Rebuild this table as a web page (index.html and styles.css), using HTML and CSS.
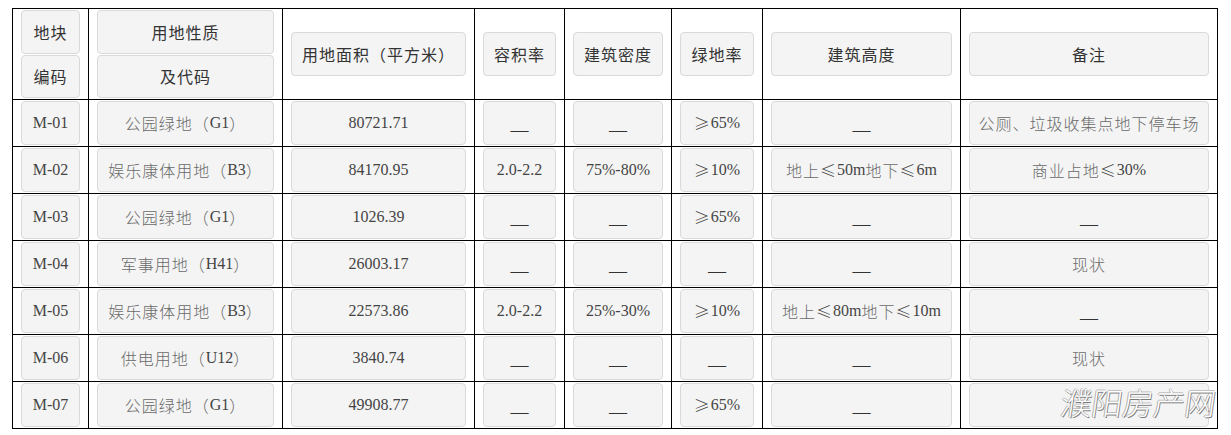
FILE: index.html
```html
<!DOCTYPE html>
<html lang="zh-CN">
<head>
<meta charset="utf-8">
<title>地块指标表</title>
<link rel="stylesheet" href="styles.css">
</head>
<body>
<div class="wrap">
<table class="plan">
  <colgroup>
    <col class="c1"><col class="c2"><col class="c3"><col class="c4"><col class="c5"><col class="c6"><col class="c7"><col class="c8">
  </colgroup>
  <thead>
    <tr>
      <th><p class="box">地块</p><p class="box">编码</p></th>
      <th><p class="box">用地性质</p><p class="box">及代码</p></th>
      <th><p class="box">用地面积（平方米）</p></th>
      <th><p class="box">容积率</p></th>
      <th><p class="box">建筑密度</p></th>
      <th><p class="box">绿地率</p></th>
      <th><p class="box">建筑高度</p></th>
      <th><p class="box">备注</p></th>
    </tr>
  </thead>
  <tbody>
    <tr>
      <td><p class="box num">M-01</p></td>
      <td><p class="box">公园绿地（<span class="n">G1</span>）</p></td>
      <td><p class="box num">80721.71</p></td>
      <td><p class="box"><span class="dash">—</span></p></td>
      <td><p class="box"><span class="dash">—</span></p></td>
      <td><p class="box num"><span class="ge">≥</span>65%</p></td>
      <td><p class="box"><span class="dash">—</span></p></td>
      <td><p class="box">公厕、垃圾收集点地下停车场</p></td>
    </tr>
    <tr>
      <td><p class="box num">M-02</p></td>
      <td><p class="box">娱乐康体用地（<span class="n">B3</span>）</p></td>
      <td><p class="box num">84170.95</p></td>
      <td><p class="box num">2.0-2.2</p></td>
      <td><p class="box num">75%-80%</p></td>
      <td><p class="box num"><span class="ge">≥</span>10%</p></td>
      <td><p class="box">地上<span class="ge">≤</span><span class="n">50m</span>地下<span class="ge">≤</span><span class="n">6m</span></p></td>
      <td><p class="box">商业占地<span class="ge">≤</span><span class="n">30%</span></p></td>
    </tr>
    <tr>
      <td><p class="box num">M-03</p></td>
      <td><p class="box">公园绿地（<span class="n">G1</span>）</p></td>
      <td><p class="box num">1026.39</p></td>
      <td><p class="box"><span class="dash">—</span></p></td>
      <td><p class="box"><span class="dash">—</span></p></td>
      <td><p class="box num"><span class="ge">≥</span>65%</p></td>
      <td><p class="box"><span class="dash">—</span></p></td>
      <td><p class="box"><span class="dash">—</span></p></td>
    </tr>
    <tr>
      <td><p class="box num">M-04</p></td>
      <td><p class="box">军事用地（<span class="n">H41</span>）</p></td>
      <td><p class="box num">26003.17</p></td>
      <td><p class="box"><span class="dash">—</span></p></td>
      <td><p class="box"><span class="dash">—</span></p></td>
      <td><p class="box"><span class="dash">—</span></p></td>
      <td><p class="box"><span class="dash">—</span></p></td>
      <td><p class="box">现状</p></td>
    </tr>
    <tr>
      <td><p class="box num">M-05</p></td>
      <td><p class="box">娱乐康体用地（<span class="n">B3</span>）</p></td>
      <td><p class="box num">22573.86</p></td>
      <td><p class="box num">2.0-2.2</p></td>
      <td><p class="box num">25%-30%</p></td>
      <td><p class="box num"><span class="ge">≥</span>10%</p></td>
      <td><p class="box">地上<span class="ge">≤</span><span class="n">80m</span>地下<span class="ge">≤</span><span class="n">10m</span></p></td>
      <td><p class="box"><span class="dash">—</span></p></td>
    </tr>
    <tr>
      <td><p class="box num">M-06</p></td>
      <td><p class="box">供电用地（<span class="n">U12</span>）</p></td>
      <td><p class="box num">3840.74</p></td>
      <td><p class="box"><span class="dash">—</span></p></td>
      <td><p class="box"><span class="dash">—</span></p></td>
      <td><p class="box"><span class="dash">—</span></p></td>
      <td><p class="box"><span class="dash">—</span></p></td>
      <td><p class="box">现状</p></td>
    </tr>
    <tr>
      <td><p class="box num">M-07</p></td>
      <td><p class="box">公园绿地（<span class="n">G1</span>）</p></td>
      <td><p class="box num">49908.77</p></td>
      <td><p class="box"><span class="dash">—</span></p></td>
      <td><p class="box"><span class="dash">—</span></p></td>
      <td><p class="box num"><span class="ge">≥</span>65%</p></td>
      <td><p class="box"><span class="dash">—</span></p></td>
      <td><p class="box"></p></td>
    </tr>
  </tbody>
</table>
<div class="watermark">濮阳房产网</div>
</div>
</body>
</html>
```

FILE: styles.css
```css
html, body {
  margin: 0;
  padding: 0;
  background: #ffffff;
}

body {
  font-family: "Liberation Serif", "Noto Sans CJK SC", serif;
  font-size: 16px;
  color: #555555;
}

.wrap {
  position: relative;
  width: 1231px;
  height: 435px;
  padding: 8px 0 0 12px;
  box-sizing: border-box;
}

.plan {
  border-collapse: collapse;
  table-layout: fixed;
  width: 1206px;
}

.c1 { width: 76px; }
.c2 { width: 194px; }
.c3 { width: 192px; }
.c4 { width: 90px; }
.c5 { width: 107px; }
.c6 { width: 91px; }
.c7 { width: 198px; }
.c8 { width: 257px; }

.plan th,
.plan td {
  border: 1px solid #000000;
  padding: 0 8px 0 8px;
  vertical-align: middle;
  text-align: center;
  font-weight: normal;
}

.box {
  box-sizing: border-box;
  height: 44px;
  margin: 1px 0;
  border: 1px solid #d9d9d9;
  border-radius: 4px;
  background: #f4f4f4;
  display: flex;
  align-items: center;
  justify-content: center;
  white-space: nowrap;
  line-height: 20px;
}

.plan th .box {
  height: 43.5px;
  color: #333333;
  font-family: "Noto Sans CJK SC", "Liberation Serif", sans-serif;
  font-size: 16px;
  letter-spacing: 1px;
}

.plan td .box {
  color: #6a6a6a;
  font-family: "Noto Sans CJK SC", "Liberation Serif", sans-serif;
  font-weight: 300;
  letter-spacing: 1px;
}

.plan td .box.num,
.plan td .box .n {
  font-family: "Liberation Serif", "Noto Sans CJK SC", serif;
  color: #444444;
  font-weight: normal;
  letter-spacing: 0;
}

.plan td .box .ge {
  font-family: "Noto Sans CJK SC", sans-serif;
  color: #444444;
  font-weight: 300;
  letter-spacing: 0;
  margin-right: 1px;
}

.dash {
  display: inline-block;
  font-family: "Liberation Serif", serif;
  font-size: 18px;
  color: #333333;
  letter-spacing: 0;
  transform: translateY(7px);
}

.watermark {
  position: absolute;
  left: 1061px;
  top: 382px;
  font-family: "Noto Sans CJK SC", sans-serif;
  font-size: 31px;
  font-weight: 300;
  line-height: 40px;
  color: #ffffff;
  letter-spacing: 0;
  transform: skewX(-8deg);
  text-shadow: 1px 1px 0 #7a7a7a, -1px 0 0 #b0b0b0, 0 -1px 0 #c0c0c0;
}
```
